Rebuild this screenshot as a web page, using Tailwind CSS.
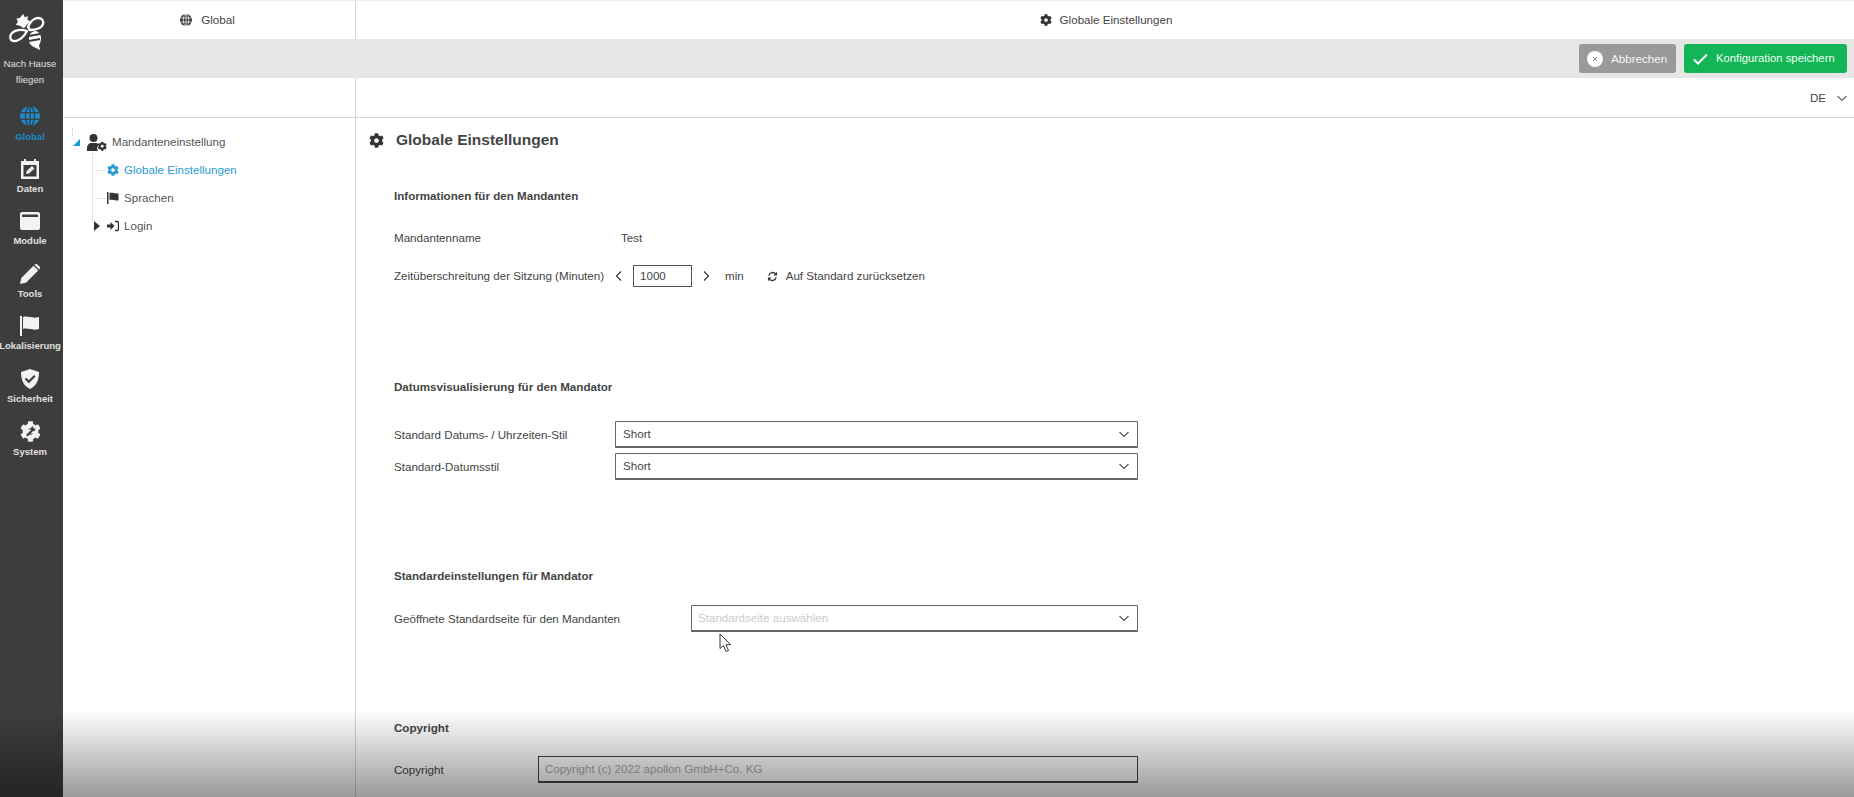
<!DOCTYPE html>
<html lang="de">

<head>
  <meta charset="UTF-8" />
  <title>Globale Einstellungen</title>
  <script src="https://cdn.jsdelivr.net/npm/@tailwindcss/browser@4"></script>
</head>

<body class="bg-white text-[#444] font-['Liberation_Sans',Arial,sans-serif] text-[11.6px]">
  <svg class="hidden">
    <symbol id="cog" viewBox="0 0 512 512">
      <path fill="currentColor" d="M487.4 315.7l-42.6-24.6c4.3-23.2 4.3-47 0-70.2l42.6-24.6c4.9-2.8 7.1-8.6 5.5-14-11.1-35.6-30-67.8-54.7-94.6-3.8-4.1-10-5.1-14.8-2.3L380.8 110c-17.9-15.4-38.5-27.3-60.8-35.1V25.8c0-5.6-3.9-10.5-9.4-11.7-36.7-8.2-74.3-7.8-109.2 0-5.5 1.2-9.4 6.1-9.4 11.7V75c-22.2 7.9-42.8 19.8-60.8 35.1L88.7 85.5c-4.9-2.8-11-1.9-14.8 2.3-24.7 26.7-43.6 58.9-54.7 94.6-1.7 5.4.6 11.2 5.5 14L67.3 221c-4.3 23.2-4.3 47 0 70.2l-42.6 24.6c-4.9 2.8-7.1 8.6-5.5 14 11.1 35.6 30 67.8 54.7 94.6 3.8 4.1 10 5.1 14.8 2.3l42.6-24.6c17.9 15.4 38.5 27.3 60.8 35.1v49.2c0 5.6 3.9 10.5 9.4 11.7 36.7 8.2 74.3 7.8 109.2 0 5.5-1.2 9.4-6.1 9.4-11.7v-49.2c22.2-7.9 42.8-19.8 60.8-35.1l42.6 24.6c4.9 2.8 11 1.9 14.8-2.3 24.7-26.7 43.6-58.9 54.7-94.6 1.5-5.5-.7-11.3-5.6-14.1zM256 336c-44.1 0-80-35.9-80-80s35.9-80 80-80 80 35.9 80 80-35.9 80-80 80z" />
    </symbol>
    <symbol id="globe" viewBox="0 0 24 24">
      <circle cx="12" cy="12" r="12" fill="currentColor" />
      <g fill="none" stroke="var(--gl)" stroke-width="1.5">
        <ellipse cx="12" cy="12" rx="5.5" ry="12" />
        <path d="M12 0v24M1 8h22M1 16h22" />
      </g>
    </symbol>
    <symbol id="chev" viewBox="0 0 12 12">
      <path d="M1.5 4l4.5 4.500L10.500 4" fill="none" stroke="currentColor" stroke-width="1.100" />
    </symbol>
  </svg>

  <div class="relative flex h-[797px] w-[1854px] overflow-hidden">
    <!-- Sidebar -->
    <aside class="flex w-[63px] shrink-0 flex-col items-center bg-[#3d3d3d] pr-[3px] text-[9.5px] text-[#e0e0e0]">
      <svg class="mt-[9px] h-[46px] w-[46px]" viewBox="8 8 46 46">
        <path d="M24 13l1.800 3.200 3.200-1-.6 3.500 3 1.500-3 3-3.500 4-4-2.500-4-1 2-3-1.500-3.300 3.400-.4z" fill="#fff" />
        <path d="M29 26c2-5 6-9 10-9 4 0 6 3 5 6-1 4-7 6-13 6z" fill="none" stroke="#fff" stroke-width="2.300" />
        <path d="M28 30c-6-2-12-1-15 2-3 3-2 7 1 8 5 1 11-4 14-10z" fill="none" stroke="#fff" stroke-width="2.300" />
        <path d="M30 36c1-4 4-6 7-6 3 1 5 4 5 7 0 3-1 6-2 7l1 5-4-2c-3-1-6-3-7-6z" fill="#fff" />
        <path d="M30 35l11-2M30 40l11-2" stroke="#3d3d3d" stroke-width="1.800" />
      </svg>
      <div class="mt-[1px] text-center text-[9.6px] leading-[16px]">Nach Hause<br />fliegen</div>

      <nav class="mt-[18px] flex flex-col items-center">
        <a class="flex h-[52.500px] w-[60px] flex-col items-center text-[#1b8bc9] font-bold [--gl:#3d3d3d]">
          <svg class="h-[20px] w-[20px]"><use href="#globe" /></svg>
          <span class="mt-[5px] leading-[12px]">Global</span>
        </a>
        <a class="flex h-[52.500px] w-[60px] flex-col items-center font-bold">
          <svg class="h-[20px] w-[20px]" viewBox="0 0 20 20">
            <path fill-rule="evenodd" fill="#f2f2f2" d="M4 0h2v2h8V0h2v2h3v18H1V2h3zM3.500 6v11.500h13V6z" />
            <path fill="#f2f2f2" d="M6 15l.6-3 5.400-5 2.500 2.500-5.400 5z" />
          </svg>
          <span class="mt-[4px] leading-[12px]">Daten</span>
        </a>
        <a class="flex h-[52.500px] w-[60px] flex-col items-center font-bold">
          <svg class="h-[20px] w-[20px]" viewBox="0 0 20 20">
            <path fill-rule="evenodd" fill="#f2f2f2" d="M2 1h16a2 2 0 0 1 2 2v14a2 2 0 0 1-2 2H2a2 2 0 0 1-2-2V3a2 2 0 0 1 2-2zM2 3.500V6h16V3.500z" />
          </svg>
          <span class="mt-[4px] leading-[12px]">Module</span>
        </a>
        <a class="flex h-[52.500px] w-[60px] flex-col items-center font-bold">
          <svg class="h-[20px] w-[20px]" viewBox="0 0 20 20">
            <path fill="#f2f2f2" d="M0 20l1.300-6L13.500 1.800 18.200 6.500 6 18.700zM15 .5a1.700 1.700 0 0 1 2.400 0l2.100 2.100a1.700 1.700 0 0 1 0 2.400L19 5.500 14.500 1z" />
          </svg>
          <span class="mt-[4px] leading-[12px]">Tools</span>
        </a>
        <a class="flex h-[52.500px] w-[60px] flex-col items-center font-bold">
          <svg class="h-[20px] w-[20px]" viewBox="0 0 20 20">
            <path fill="#f2f2f2" d="M0 0h2v20H0zM3 1c5-1.500 9 2 16 0v12c-7 2-11-1.500-16 0z" />
          </svg>
          <span class="mt-[4px] whitespace-nowrap leading-[12px]">Lokalisierung</span>
        </a>
        <a class="flex h-[52.500px] w-[60px] flex-col items-center font-bold">
          <svg class="h-[20px] w-[20px]" viewBox="0 0 20 20">
            <path fill="#f2f2f2" d="M10 0l9 3c0 9-3 14-9 17C4 17 1 12 1 3z" />
            <path fill="none" stroke="#3d3d3d" stroke-width="2.200" d="M5.500 9.500l3.300 3.300 6-6" />
          </svg>
          <span class="mt-[4px] leading-[12px]">Sicherheit</span>
        </a>
        <a class="flex h-[52.500px] w-[60px] flex-col items-center font-bold">
          <svg class="h-[21px] w-[21px] text-[#f2f2f2]" viewBox="0 0 20 20">
            <use href="#cog" width="20" height="20" />
            <path fill="#f2f2f2" d="M6 8h8v4H6z" />
            <path fill="none" stroke="#3d3d3d" stroke-width="2" d="M6.500 14l5-5" />
            <circle cx="12.500" cy="7.500" r="2.200" fill="#3d3d3d" />
            <circle cx="14" cy="6" r="1.300" fill="#f2f2f2" />
          </svg>
          <span class="mt-[4px] leading-[12px]">System</span>
        </a>
      </nav>
    </aside>

    <div class="flex min-w-0 flex-1 flex-col">
      <!-- Titelzeile -->
      <div class="flex h-[39px] border-t border-[#eee]">
        <div class="flex w-[293px] shrink-0 items-center justify-center gap-[9px] border-r border-[#d4d4d4] pr-[3px]">
          <svg class="h-[12px] w-[12px] text-[#333] [--gl:#fff]"><use href="#globe" /></svg>
          <span>Global</span>
        </div>
        <div class="flex flex-1 items-center justify-center gap-[8px] pl-[2px]">
          <svg class="h-[12px] w-[12px] text-[#333]"><use href="#cog" /></svg>
          <span>Globale Einstellungen</span>
        </div>
      </div>

      <!-- Aktionen -->
      <div class="flex h-[39px] items-center justify-end gap-[8px] bg-[#e6e6e6] pr-[7px]">
        <button class="flex h-[29px] w-[97px] items-center gap-[8px] rounded-[3px] bg-[#999] pl-[8px] text-[#f5f5f5]">
          <span class="flex h-[16px] w-[16px] items-center justify-center rounded-full bg-white">
            <svg class="h-[6px] w-[6px]" viewBox="0 0 6 6"><path d="M1 1l4 4M5 1L1 5" stroke="#888" stroke-width="1" /></svg>
          </span>
          Abbrechen
        </button>
        <button class="flex h-[29px] w-[163px] items-center gap-[8px] rounded-[3px] bg-[#14b556] pl-[9px] text-[11.3px] text-[#f0fff4]">
          <svg class="h-[12px] w-[15px]" viewBox="0 0 15 12"><path d="M1 6.500l4 4L14 1.500" fill="none" stroke="#fff" stroke-width="2" /></svg>
          Konfiguration speichern
        </button>
      </div>

      <!-- Sprache -->
      <div class="flex h-[39px] items-center justify-end gap-[10px] pr-[6px]">
        <div class="mr-auto h-full w-[293px] border-r border-[#d4d4d4]"></div>
        <span>DE</span>
        <svg class="h-[12px] w-[12px] text-[#666]"><use href="#chev" /></svg>
      </div>

      <div class="flex flex-1 border-t border-[#d8d8d8]">
        <!-- Baum -->
        <div class="relative w-[293px] shrink-0 border-r border-[#d4d4d4] pt-[10px] text-[#555]">
          <div class="absolute left-[9px] top-[10px] h-[8px] border-l border-dotted border-[#ccc]"></div>
          <div class="absolute left-[29px] top-[35px] h-[68px] border-l border-dotted border-[#ccc]"></div>
          <div class="flex h-[28px] items-center">
            <span class="ml-[10px] h-0 w-0 border-b-[7px] border-l-[7px] border-b-[#1b9ad6] border-l-transparent"></span>
            <svg class="ml-[7px] h-[17px] w-[20px] text-[#333]" viewBox="0 0 20 17">
              <circle cx="6.500" cy="4" r="4" fill="currentColor" />
              <path fill="currentColor" d="M0 17v-3c0-3 2-5 4.500-5h4c1.500 0 2.500.5 3.200 1.500L10 14l.8 3z" />
              <use href="#cog" x="10.500" y="7.500" width="9.500" height="9.500" />
            </svg>
            <span class="ml-[5px]">Mandanteneinstellung</span>
          </div>
          <div class="flex h-[28px] items-center pl-[33px] text-[#2b9bd3]">
            <span class="w-[9px] border-t border-dotted border-[#ccc]"></span>
            <svg class="ml-[2px] h-[12px] w-[12px]"><use href="#cog" /></svg>
            <span class="ml-[5px]">Globale Einstellungen</span>
          </div>
          <div class="flex h-[28px] items-center pl-[33px]">
            <span class="w-[9px] border-t border-dotted border-[#ccc]"></span>
            <svg class="ml-[2px] h-[12px] w-[12px]" viewBox="0 0 12 12"><path fill="#333" d="M0 0h1.500v12H0zM2.500 1c3-.8 5 1 9 .2v7c-4 .8-6-1-9-.2z" /></svg>
            <span class="ml-[5px]">Sprachen</span>
          </div>
          <div class="flex h-[28px] items-center pl-[31px]">
            <span class="h-0 w-0 border-y-[5px] border-l-[6px] border-y-transparent border-l-[#333]"></span>
            <svg class="ml-[7px] h-[12px] w-[12px]" viewBox="0 0 12 12">
              <path fill="#333" d="M0 4.500h3.500V2l4 4-4 4V7.500H0z" />
              <path fill="none" stroke="#333" stroke-width="1.500" d="M8 1.500h2.500a1 1 0 0 1 1 1v7a1 1 0 0 1-1 1H8" />
            </svg>
            <span class="ml-[5px]">Login</span>
          </div>
        </div>

        <!-- Inhalt -->
        <main class="flex-1 pl-[13px]">
          <div class="mt-[14px] flex h-[16px] items-center">
            <svg class="h-[15px] w-[15px] text-[#333]"><use href="#cog" /></svg>
            <h1 class="ml-[12px] text-[15.5px] font-bold text-[#444]">Globale Einstellungen</h1>
          </div>

          <section class="ml-[25px] w-[744px]">
            <h2 class="mt-[41px] font-bold leading-[14px]">Informationen für den Mandanten</h2>
            <div class="mt-[28px] flex h-[14px] items-center">
              <span class="w-[227px]">Mandantenname</span><span>Test</span>
            </div>
            <div class="mt-[20px] flex h-[22px] items-center">
              <span class="w-[212px] whitespace-nowrap">Zeitüberschreitung der Sitzung (Minuten)</span>
              <svg class="ml-[9px] h-[10px] w-[7px]" viewBox="0 0 7 10"><path d="M6 .5L1.500 5 6 9.500" fill="none" stroke="#333" stroke-width="1.200" /></svg>
              <span class="ml-[11px] flex h-[22px] w-[59px] items-center border border-[#555] pl-[6px]">1000</span>
              <svg class="ml-[11px] h-[10px] w-[7px]" viewBox="0 0 7 10"><path d="M1 .5L5.500 5 1 9.500" fill="none" stroke="#333" stroke-width="1.200" /></svg>
              <span class="ml-[15px]">min</span>
              <svg class="ml-[23px] h-[11px] w-[11px]" viewBox="0 0 12 12">
                <path fill="none" stroke="#333" stroke-width="1.500" d="M2 5a4.300 4.300 0 0 1 7.500-1.800M10 7a4.300 4.300 0 0 1-7.500 1.800" />
                <path fill="#333" d="M11 .8v4H7zM1 11.200v-4h4z" />
              </svg>
              <span class="ml-[8px]">Auf Standard zurücksetzen</span>
            </div>

            <h2 class="mt-[93px] font-bold leading-[14px]">Datumsvisualisierung für den Mandator</h2>
            <div class="mt-[27px] flex h-[27px] items-center">
              <span class="w-[221px]">Standard Datums- / Uhrzeiten-Stil</span>
              <div class="flex h-[27px] flex-1 items-center justify-between rounded-[1px] border border-b-2 border-[#666] px-[7px]">
                <span>Short</span><svg class="h-[12px] w-[12px] text-[#555]"><use href="#chev" /></svg>
              </div>
            </div>
            <div class="mt-[5px] flex h-[27px] items-center">
              <span class="w-[221px]">Standard-Datumsstil</span>
              <div class="flex h-[27px] flex-1 items-center justify-between rounded-[1px] border border-b-2 border-[#666] px-[7px]">
                <span>Short</span><svg class="h-[12px] w-[12px] text-[#555]"><use href="#chev" /></svg>
              </div>
            </div>

            <h2 class="mt-[89px] font-bold leading-[14px]">Standardeinstellungen für Mandator</h2>
            <div class="mt-[22px] flex h-[27px] items-center">
              <span class="w-[297px]">Geöffnete Standardseite für den Mandanten</span>
              <div class="flex h-[27px] flex-1 items-center justify-between rounded-[1px] border border-b-2 border-[#666] pr-[7px] pl-[6px]">
                <span class="text-[#ccc]">Standardseite auswählen</span><svg class="h-[12px] w-[12px] text-[#555]"><use href="#chev" /></svg>
              </div>
            </div>

            <h2 class="mt-[89px] font-bold leading-[14px]">Copyright</h2>
            <div class="mt-[21px] flex h-[27px] items-center">
              <span class="w-[144px]">Copyright</span>
              <div class="flex h-[27px] flex-1 items-center border border-b-2 border-[#444] px-[6px] text-[#aaa]">Copyright (c) 2022 apollon GmbH+Co. KG</div>
            </div>
          </section>
        </main>
      </div>
    </div>

    <!-- Mauszeiger -->
    <svg class="absolute left-[719px] top-[633px] h-[20px] w-[13px]" viewBox="0 0 13 20">
      <path d="M1 1v14.500l3.500-3 2.500 6 2.500-1-2.500-5.800h4.500z" fill="#fff" stroke="#333" stroke-width="1" />
    </svg>

    <!-- Verlauf am unteren Rand -->
    <div class="pointer-events-none absolute inset-x-0 bottom-0 h-[87px] bg-gradient-to-b from-black/0 to-black/40"></div>
  </div>
</body>

</html>
